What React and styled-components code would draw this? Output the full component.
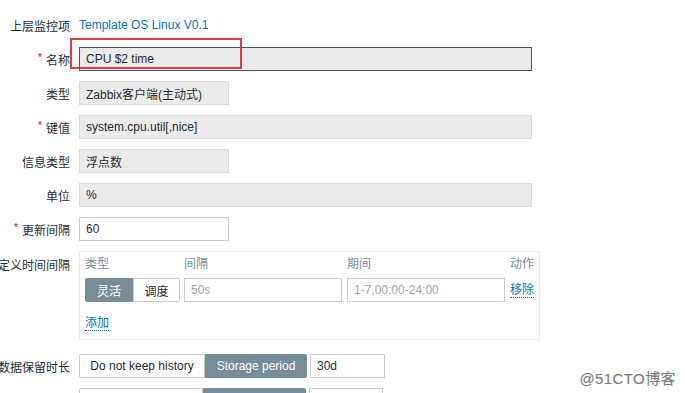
import React from 'react'
import styled, { createGlobalStyle } from 'styled-components'

const Global = createGlobalStyle`
  html, body {
    margin: 0;
    padding: 0;
    background: #fff;
    overflow: hidden;
  }
  body {
    font-family: Arial, "Liberation Sans", "Noto Sans CJK SC", sans-serif;
    font-size: 12px;
    color: #1f2c33;
  }
`

const Page = styled.div`
  position: relative;
  width: 685px;
  height: 393px;
  overflow: hidden;
`

const Form = styled.div`
  display: flex;
  flex-direction: column;
  gap: 10px;
  padding-top: 13px;
`

const Row = styled.div`
  display: grid;
  grid-template-columns: 70px 453px;
  column-gap: 9px;
  align-items: start;
  margin-top: ${p => p.$mt || 0}px;
`

const Label = styled.div`
  display: flex;
  justify-content: flex-end;
  align-items: center;
  height: ${p => p.$h || 24}px;
  white-space: nowrap;
  font-size: 12px;
  color: #1f2c33;
`

const Star = styled.span`
  color: #d40000;
  font-size: 10px;
  margin-right: 4px;
  position: relative;
  top: -2px;
`

const Value = styled.div`
  display: flex;
  align-items: center;
  height: 24px;
`

const Link = styled.a`
  color: #0275b8;
  font-size: 12px;
  text-decoration: none;
  cursor: pointer;
`

const DottedLink = styled(Link)`
  border-bottom: 1px dotted #0275b8;
  line-height: 14px;
`

const Input = styled.div`
  box-sizing: border-box;
  flex-shrink: 0;
  width: ${p => p.$w}px;
  height: 24px;
  padding: 0 6px;
  display: flex;
  align-items: center;
  font-size: 12px;
  color: ${p => (p.$placeholder ? '#9aa4a9' : '#1f2c33')};
  background: ${p => (p.$readonly ? '#ebebeb' : '#fff')};
  border: 1px solid ${p => (p.$focus ? '#38586b' : p.$readonly ? '#dcdcdc' : '#c8ced1')};
  white-space: nowrap;
`

const Segmented = styled.div`
  display: flex;
  height: 24px;
`

const Seg = styled.div`
  box-sizing: border-box;
  flex-shrink: 0;
  width: ${p => p.$w}px;
  height: 24px;
  display: flex;
  align-items: center;
  justify-content: center;
  font-size: 12px;
  white-space: nowrap;
  background: ${p => (p.$on ? '#768d99' : '#fff')};
  color: ${p => (p.$on ? '#fff' : '#1f2c33')};
  border: 1px solid ${p => (p.$on ? '#768d99' : '#c8ced1')};
  border-radius: ${p => (p.$first ? '2px 0 0 2px' : p.$last ? '0 2px 2px 0' : '0')};
`

const IntervalBox = styled.div`
  box-sizing: border-box;
  width: 461px;
  height: 89px;
  border: 1px solid #ebebeb;
  padding: 6px 5px 0 5px;
`

const IntervalGrid = styled.div`
  display: grid;
  grid-template-columns: 99px 163px 163px 1fr;
  row-gap: 7px;
`

const Cell = styled.div`
  display: flex;
  align-items: center;
  justify-content: ${p => (p.$right ? 'flex-end' : 'flex-start')};
`

const Header = styled.div`
  font-size: 12px;
  color: #768d99;
  height: 13px;
  line-height: 13px;
  text-align: ${p => (p.$right ? 'right' : 'left')};
`

const AddRow = styled.div`
  margin-top: 13px;
  height: 16px;
  display: flex;
  align-items: center;
`

const Inline = styled.div`
  display: flex;
  align-items: center;
  gap: 3px;
`

const Highlight = styled.div`
  position: absolute;
  left: 70px;
  top: 38px;
  width: 172px;
  height: 31px;
  box-sizing: border-box;
  border: 2px solid #e03c3c;
  pointer-events: none;
`

const Watermark = styled.div`
  position: absolute;
  right: 9px;
  top: 367px;
  font-size: 15px;
  color: #7a7a7a;
  letter-spacing: 0.4px;
  text-shadow: 0 0 2px #e0e0e0;
`

export default function App() {
  return (
    <Page>
      <Global />
      <Form>
        <Row>
          <Label>上层监控项</Label>
          <Value><Link>Template OS Linux V0.1</Link></Value>
        </Row>
        <Row>
          <Label><Star>*</Star>名称</Label>
          <Input $w={453} $readonly $focus>CPU $2 time</Input>
        </Row>
        <Row>
          <Label>类型</Label>
          <Input $w={150} $readonly>Zabbix客户端(主动式)</Input>
        </Row>
        <Row>
          <Label><Star>*</Star>键值</Label>
          <Input $w={453} $readonly>system.cpu.util[,nice]</Input>
        </Row>
        <Row>
          <Label>信息类型</Label>
          <Input $w={150} $readonly>浮点数</Input>
        </Row>
        <Row>
          <Label>单位</Label>
          <Input $w={453} $readonly>%</Input>
        </Row>
        <Row>
          <Label><Star>*</Star>更新间隔</Label>
          <Input $w={150}>60</Input>
        </Row>
        <Row>
          <Label $h={26}>自定义时间间隔</Label>
          <IntervalBox>
            <IntervalGrid>
              <Header>类型</Header>
              <Header>间隔</Header>
              <Header>期间</Header>
              <Header $right>动作</Header>
              <Cell>
                <Segmented>
                  <Seg $w={48} $on $first>灵活</Seg>
                  <Seg $w={47} $last>调度</Seg>
                </Segmented>
              </Cell>
              <Cell>
                <Input $w={158} $placeholder>50s</Input>
              </Cell>
              <Cell>
                <Input $w={158} $placeholder>1-7,00:00-24:00</Input>
              </Cell>
              <Cell $right>
                <DottedLink>移除</DottedLink>
              </Cell>
            </IntervalGrid>
            <AddRow><DottedLink>添加</DottedLink></AddRow>
          </IntervalBox>
        </Row>
        <Row $mt={4}>
          <Label>数据保留时长</Label>
          <Inline>
            <Segmented>
              <Seg $w={126} $first>Do not keep history</Seg>
              <Seg $w={102} $on $last>Storage period</Seg>
            </Segmented>
            <Input $w={75}>30d</Input>
          </Inline>
        </Row>
        <Row>
          <Label>趋势存储时间</Label>
          <Inline>
            <Segmented>
              <Seg $w={124} $first>Do not keep trends</Seg>
              <Seg $w={103} $on $last>Storage period</Seg>
            </Segmented>
            <Input $w={74}>365d</Input>
          </Inline>
        </Row>
      </Form>
      <Highlight />
      <Watermark>@51CTO博客</Watermark>
    </Page>
  )
}
